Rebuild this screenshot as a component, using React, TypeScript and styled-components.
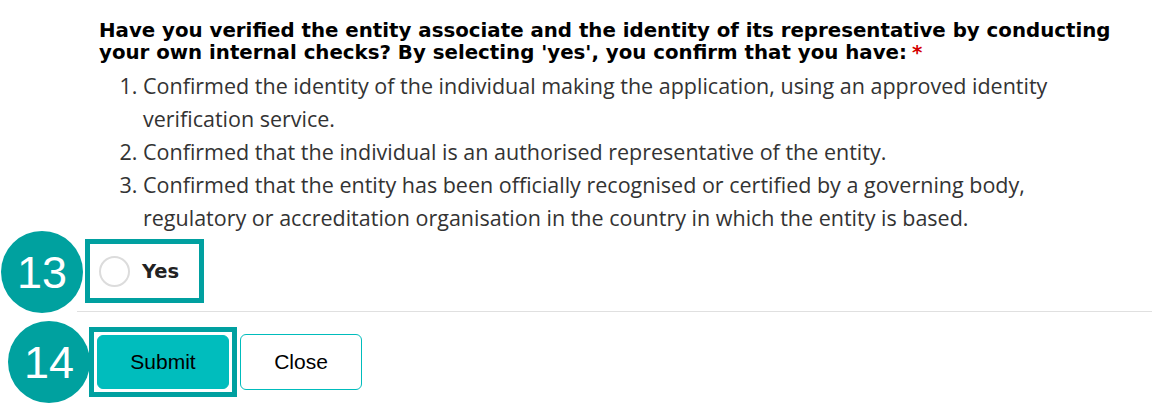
import React from 'react';
import styled, { createGlobalStyle } from 'styled-components';

const GlobalStyle = createGlobalStyle`
  html, body {
    margin: 0;
    padding: 0;
    background: #fff;
  }
  body {
    font-family: "Open Sans", "Liberation Sans", sans-serif;
    overflow: hidden;
  }
`;

const Page = styled.div`
  position: relative;
  width: 1152px;
  height: 412px;
  padding-left: 77px;
  box-sizing: border-box;
`;

const Question = styled.div`
  padding: 20px 0 0 22px;
`;

const Heading = styled.h2`
  margin: 0;
  font-family: "DejaVu Sans", "Open Sans", sans-serif;
  font-weight: 700;
  font-size: 19.8px;
  line-height: 22px;
  color: #000;
  white-space: nowrap;
`;

const Required = styled.span`
  color: #d40000;
  margin-left: 5px;
`;

const Steps = styled.ol`
  margin: 5px 0 0;
  padding-left: 44px;
  font-size: 21.5px;
  line-height: 33px;
  color: #333;
  white-space: nowrap;
`;

const Step = styled.li`
  padding-left: 0;
`;

const Highlight = styled.div<{ $pad: number }>`
  display: inline-flex;
  align-items: center;
  border: 5px solid #00a0a0;
  padding: ${p => p.$pad}px;
  box-sizing: border-box;
`;

const YesRow = styled.div`
  margin: 5px 0 0 8px;
  height: 64px;
`;

const YesOption = styled.label`
  display: flex;
  align-items: center;
  gap: 12px;
  height: 54px;
  padding: 0 20px 0 9px;
  font-family: "DejaVu Sans", "Open Sans", sans-serif;
  font-weight: 700;
  font-size: 19.5px;
  color: #222;
`;

const Radio = styled.span`
  width: 27px;
  height: 27px;
  border-radius: 50%;
  border: 2px solid #dcdcdc;
  background: #fff;
`;

const Divider = styled.hr`
  margin: 8px 0 0;
  border: 0;
  border-top: 1.5px solid #e0e0e0;
`;

const Actions = styled.div`
  display: flex;
  align-items: center;
  gap: 3px;
  margin: 15px 0 0 12px;
`;

const Button = styled.button<{ $primary?: boolean }>`
  font-family: "Liberation Sans", Arial, sans-serif;
  font-size: 21px;
  color: #000;
  border-radius: 6px;
  cursor: pointer;
  border: 1px solid #00bcbc;
  background: ${p => (p.$primary ? '#00bdbd' : '#fff')};
  width: ${p => (p.$primary ? 132 : 122)}px;
  height: ${p => (p.$primary ? 54 : 56)}px;
`;

const Badge = styled.div<{ $top: number; $left: number }>`
  position: absolute;
  top: ${p => p.$top}px;
  left: ${p => p.$left}px;
  width: 82px;
  height: 82px;
  border-radius: 50%;
  background: #00a19f;
  color: #fff;
  display: flex;
  align-items: center;
  justify-content: center;
  font-family: "Liberation Sans", Arial, sans-serif;
  font-size: 45px;
  line-height: 1;
`;

export default function App() {
  return (
    <>
      <GlobalStyle />
      <Page>
        <Question>
          <Heading>
            Have you verified the entity associate and the identity of its representative by conducting
            <br />
            your own internal checks? By selecting 'yes', you confirm that you have:
            <Required>*</Required>
          </Heading>
          <Steps>
            <Step>
              Confirmed the identity of the individual making the application, using an approved identity
              <br />
              verification service.
            </Step>
            <Step>Confirmed that the individual is an authorised representative of the entity.</Step>
            <Step>
              Confirmed that the entity has been officially recognised or certified by a governing body,
              <br />
              regulatory or accreditation organisation in the country in which the entity is based.
            </Step>
          </Steps>
        </Question>

        <YesRow>
          <Highlight $pad={0}>
            <YesOption>
              <Radio />
              Yes
            </YesOption>
          </Highlight>
        </YesRow>

        <Divider />

        <Actions>
          <Highlight $pad={3}>
            <Button $primary>Submit</Button>
          </Highlight>
          <Button>Close</Button>
        </Actions>

        <Badge $top={231} $left={1}>13</Badge>
        <Badge $top={321} $left={8}>14</Badge>
      </Page>
    </>
  );
}
